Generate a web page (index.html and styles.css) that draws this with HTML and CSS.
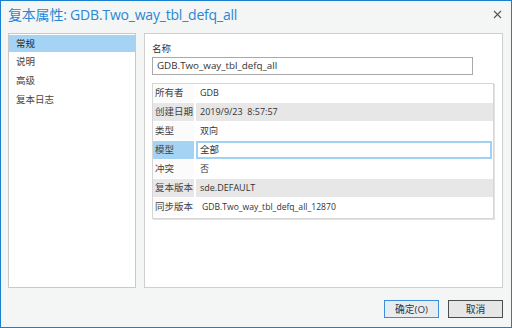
FILE: index.html
```html
<!DOCTYPE html>
<html lang="zh-CN">
<head>
    <meta charset="UTF-8">
    <title>复本属性</title>
    <link rel="stylesheet" href="styles.css">
</head>
<body>
    <div class="window">
        <!-- Barra de título -->
        <div class="titlebar">
            <span class="title">复本属性: GDB.Two_way_tbl_defq_all</span>
            <svg class="close" width="9" height="9" viewBox="0 0 9 9">
                <path d="M1 1 L8 8 M8 1 L1 8" stroke="#555" stroke-width="1.1" fill="none"/>
            </svg>
        </div>

        <div class="main">
            <ul class="nav">
                <li class="active">常规</li>
                <li>说明</li>
                <li>高级</li>
                <li>复本日志</li>
            </ul>

            <div class="panel">
                <div class="field-label">名称</div>
                <div class="name-input">GDB.Two_way_tbl_defq_all</div>

                <div class="props">
                    <div class="row">
                        <div class="key">所有者</div>
                        <div class="val">GDB</div>
                    </div>
                    <div class="row alt">
                        <div class="key">创建日期</div>
                        <div class="val">2019/9/23&nbsp;&nbsp;8:57:57</div>
                    </div>
                    <div class="row">
                        <div class="key">类型</div>
                        <div class="val">双向</div>
                    </div>
                    <div class="row selected">
                        <div class="key">模型</div>
                        <div class="val">全部</div>
                    </div>
                    <div class="row">
                        <div class="key">冲突</div>
                        <div class="val">否</div>
                    </div>
                    <div class="row alt">
                        <div class="key">复本版本</div>
                        <div class="val">sde.DEFAULT</div>
                    </div>
                    <div class="row">
                        <div class="key">同步版本</div>
                        <div class="val sync">GDB.Two_way_tbl_defq_all_12870</div>
                    </div>
                </div>
            </div>
        </div>

        <div class="footer">
            <button class="btn btn-primary">确定(O)</button>
            <button class="btn">取消</button>
        </div>
    </div>
</body>
</html>
```

FILE: styles.css
```css
/* Janela do diálogo */
body {
  margin: 0;
  font-family: "Open Sans", "Noto Sans CJK SC", sans-serif;
  color: #333;
}

.window {
  box-sizing: border-box;
  width: 512px;
  height: 328px;
  border: 1px solid #1b7fcf;
  background-color: #f4f6f5;
  display: flex;
  flex-direction: column;
}

/* Barra de título */
.titlebar {
  height: 26px;
  display: flex;
  align-items: center;
  justify-content: space-between;
  padding: 0 9px 0 7px;
}

.title {
  font-size: 14px;
  color: #2a86d4;
  letter-spacing: -0.2px;
}

/* Área principal */
.main {
  display: flex;
  gap: 8px;
  padding: 6px 8px 0 7px;
  height: 255px;
}

.nav {
  list-style: none;
  margin: 0;
  padding: 1px 0 0;
  box-sizing: border-box;
  width: 128px;
  background-color: #fff;
  border: 1px solid #c9c9c9;
}

.nav li {
  height: 19px;
  line-height: 18px;
  padding-left: 7px;
  font-size: 9.5px;
  color: #444;
}

.nav li.active {
  background-color: #a4d3f3;
  height: 17px;
  line-height: 17px;
  margin-bottom: 1px;
  color: #222;
}

.panel {
  flex: 1;
  box-sizing: border-box;
  background-color: #fff;
  border: 1px solid #cfcfcf;
  padding: 8px 8px 0 7px;
}

.field-label {
  font-size: 9.5px;
  line-height: 14px;
  color: #333;
}

.name-input {
  box-sizing: border-box;
  width: 321px;
  height: 18px;
  margin-top: 1px;
  border: 1px solid #a9a9a9;
  padding-left: 4px;
  font-size: 9.8px;
  line-height: 16px;
  color: #333;
}

/* Tabela de propriedades */
.props {
  box-sizing: border-box;
  width: 342px;
  margin-top: 8px;
  border: 1px solid #d6d6d6;
  box-shadow: 1px 1px 0 #e2e2e2;
  padding-bottom: 2px;
  display: flex;
  flex-direction: column;
  gap: 1px;
}

.row {
  display: grid;
  grid-template-columns: 41px 1fr;
  gap: 2px;
  height: 18px;
  font-size: 9.5px;
  line-height: 18px;
}

.key {
  padding-left: 2px;
  color: #444;
  background-color: #fbfbfb;
}

.val {
  padding-left: 4px;
  color: #333;
  font-size: 9px;
}

.val.sync {
  padding-left: 6px;
  font-size: 8.6px;
}

.row.alt .key,
.row.alt .val {
  background-color: #e7e7e7;
}

.row.selected .key {
  background-color: #a4d3f3;
}

.row.selected .val {
  box-sizing: border-box;
  border: 2px solid #a0d1f2;
  line-height: 14px;
  padding-left: 2px;
  margin-right: 1px;
  font-size: 9.5px;
}

/* Botões */
.footer {
  display: flex;
  justify-content: flex-end;
  gap: 9px;
  padding: 12px 8px 0 0;
}

.btn {
  box-sizing: border-box;
  width: 55px;
  height: 18px;
  padding: 0;
  font-family: "Open Sans", "Noto Sans CJK SC", sans-serif;
  font-size: 9.8px;
  color: #333;
  background-color: #e6e6e6;
  border: 1px solid #4d4d4d;
}

.btn-primary {
  border-color: #3a8ee0;
  background-color: #e9ecef;
}
```
